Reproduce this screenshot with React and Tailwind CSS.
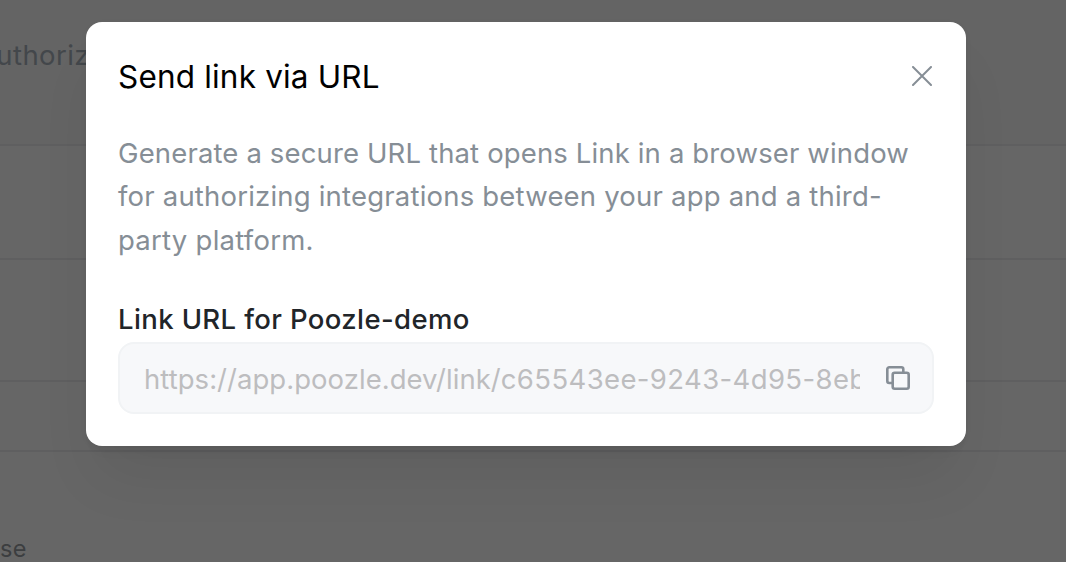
export default function App() {
  return (
    <div className="relative h-[562px] w-[1066px] overflow-hidden bg-[#666666] font-['Inter',sans-serif]">
      <div className="flex h-full flex-col">
        <div className="flex h-[146px] shrink-0 items-start border-b-2 border-[#5f5f60] bg-[#646464] pt-[36px] text-[#43474b]">
          <span className="-ml-[23px] text-[27.5px] leading-[38px] tracking-[0.4px]">Authorize</span>
        </div>
        <div className="h-[114px] shrink-0 border-b-2 border-[#5f5f60]" />
        <div className="h-[122px] shrink-0 border-b-2 border-[#5f5f60]" />
        <div className="h-[70px] shrink-0 border-b-2 border-[#5f5f60]" />
        <span className="mt-[83px] text-[23.5px] leading-[28px] tracking-[0.3px] text-[#3c3e40]">se</span>
      </div>
      <div className="absolute left-[86px] top-[22px] flex h-[424px] w-[880px] flex-col rounded-[16px] bg-white px-8 pt-8 shadow-[0_2px_6px_rgba(0,0,0,0.05),0_40px_60px_-10px_rgba(0,0,0,0.07),0_14px_14px_-10px_rgba(0,0,0,0.04)]">
        <div className="flex h-[46px] items-center justify-between">
          <h2 className="text-[31.5px] leading-[46px] tracking-[0.18px] text-black">Send link via URL</h2>
          <svg className="mb-0.5 mr-0.5 h-5 w-5" viewBox="0 0 20 20" fill="none" stroke="#868e96" strokeWidth="2" strokeLinecap="round"><path d="M1 1l18 18M19 1L1 19" /></svg>
        </div>
        <p className="mt-[32px] whitespace-nowrap text-[27.5px] leading-[43.4px] tracking-[0.14px] text-[#868e96]">
          Generate a secure URL that opens Link in a browser window<br />
          <span className="tracking-[0.2px]">for authorizing integrations between your app and a third-</span><br />
          <span className="tracking-[0.25px]">party platform.</span>
        </p>
        <label className="mt-[36px] text-[27.5px] font-medium leading-[43px] tracking-[0.38px] text-[#212529]">Link URL for Poozle-demo</label>
        <div className="mt-px flex h-[72px] shrink-0 items-center rounded-[16px] border-2 border-[#f1f3f5] bg-[#f7f8fa] pl-6 pr-[22px]">
          <span className="w-[716px] shrink-0 overflow-hidden whitespace-nowrap pt-0.5 text-[27.5px] tracking-[0.38px] text-[#bdbdbf]"><span className="tracking-[0.04px]">https://app.poozle.dev/link/</span>c65543ee-9243-4d95-8eb7</span>
          <svg className="ml-[26px] h-6 w-6 shrink-0" viewBox="0 0 24 24" fill="none" stroke="#868e96" strokeWidth="2.6" strokeLinejoin="round" strokeLinecap="round"><rect x="6.7" y="6.7" width="16" height="16" rx="2" /><path d="M6 17H3.3a2 2 0 01-2-2V3.3a2 2 0 012-2h12a2 2 0 012 2V6" /></svg>
        </div>
      </div>
    </div>
  );
}
